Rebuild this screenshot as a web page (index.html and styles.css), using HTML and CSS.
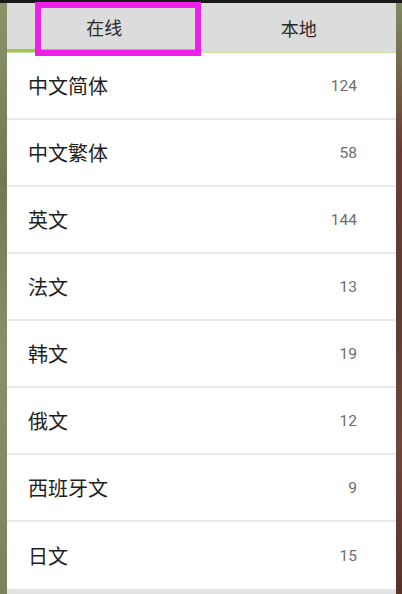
FILE: index.html
```html
<!DOCTYPE html>
<html lang="zh">
<head>
<meta charset="utf-8">
<link rel="stylesheet" href="styles.css">
</head>
<body>
<div class="topbar"></div>
<div class="frame">
  <div class="side side-left"></div>
  <div class="panel">
    <div class="tabs">
      <div class="tab active">在线</div>
      <div class="tab">本地</div>
      <div class="highlight"></div>
    </div>
    <ul class="list">
      <li class="row"><span class="name">中文简体</span><span class="count">124</span></li>
      <li class="row"><span class="name">中文繁体</span><span class="count">58</span></li>
      <li class="row"><span class="name">英文</span><span class="count">144</span></li>
      <li class="row"><span class="name">法文</span><span class="count">13</span></li>
      <li class="row"><span class="name">韩文</span><span class="count">19</span></li>
      <li class="row"><span class="name">俄文</span><span class="count">12</span></li>
      <li class="row"><span class="name">西班牙文</span><span class="count">9</span></li>
      <li class="row"><span class="name">日文</span><span class="count">15</span></li>
    </ul>
    <div class="footer"></div>
  </div>
  <div class="side side-right"></div>
</div>
</body>
</html>
```

FILE: styles.css
```css
html, body {
  margin: 0;
  padding: 0;
  width: 402px;
  height: 594px;
  overflow: hidden;
  background: #7a8460;
  font-family: "Noto Sans CJK SC", "Noto Sans", sans-serif;
}
.topbar {
  height: 3px;
  background: #1a1a1a;
}
.frame {
  display: flex;
  height: 591px;
}
.side {
  flex: none;
}
.side-left {
  width: 7px;
  background: linear-gradient(180deg, #8a9468 0%, #6f7a52 30%, #86906a 60%, #7a845c 100%);
}
.side-right {
  width: 6px;
  background: linear-gradient(180deg, #7e8a62 0%, #6a3c33 25%, #5e3a30 50%, #70463a 75%, #5a3129 100%);
}
.panel {
  flex: 1;
  display: flex;
  flex-direction: column;
  background: #ffffff;
}
.tabs {
  position: relative;
  display: flex;
  height: 49px;
  background: #dcdcdc;
  border-bottom: 1px solid #c8e0a4;
}
.tab {
  flex: 1;
  display: flex;
  align-items: center;
  justify-content: center;
  font-size: 18px;
  color: #2a2a2a;
  padding-top: 1px;
  box-sizing: border-box;
}
.tab.active {
  border-bottom: 3px solid #9bc84a;
}
.highlight {
  position: absolute;
  left: 28px;
  top: -1px;
  width: 154px;
  height: 42px;
  border: 6px solid #ee1fe8;
}
.list {
  list-style: none;
  margin: 0;
  padding: 0;
}
.row {
  display: flex;
  align-items: center;
  justify-content: space-between;
  height: 65px;
  padding: 0 39px 0 21px;
  border-bottom: 2px solid #e8e8e8;
}
.row:last-child {
  border-bottom: none;
  height: 67px;
}
.name {
  font-size: 20px;
  color: #1e1e1e;
}
.count {
  font-family: Roboto, "Noto Sans", sans-serif;
  font-size: 15.5px;
  color: #6e6e6e;
}
.footer {
  flex: 1;
  background: #e2e2e2;
}
```
